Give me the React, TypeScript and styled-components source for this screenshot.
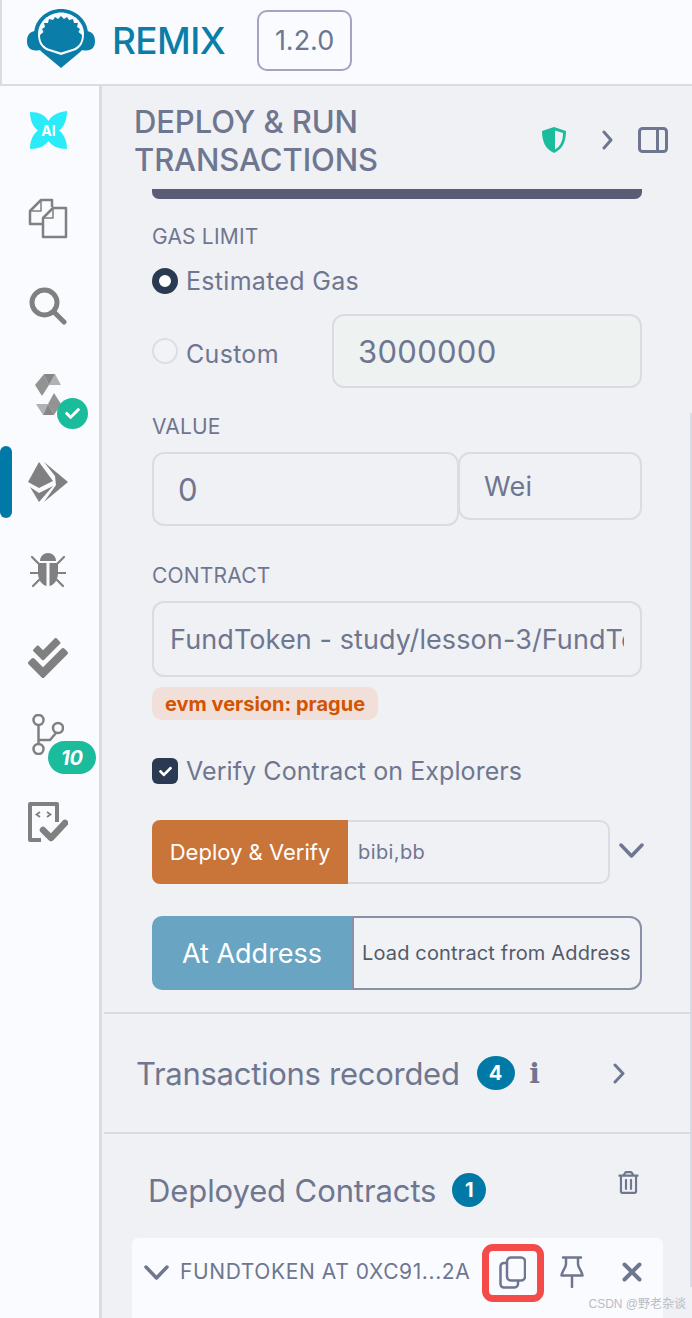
import styled, { createGlobalStyle } from "styled-components";
import { FaCheckDouble, FaRegTrashAlt, FaCheck } from "react-icons/fa";

const colors = {
  side: "#fafbff",
  panel: "#eff1f5",
  line: "#dadce3",
  text: "#6f7690",
  teal: "#0a7ea8",
  badge: "#0079a6",
  green: "#1abc9c",
  icon: "#808080",
};

const GlobalStyle = createGlobalStyle`
  html, body {
    margin: 0;
    padding: 0;
    background: ${colors.panel};
  }
  * {
    box-sizing: border-box;
  }
`;

const Page = styled.div`
  position: relative;
  width: 692px;
  height: 1318px;
  overflow: hidden;
  display: flex;
  flex-direction: column;
  font-family: Inter, "Liberation Sans", sans-serif;
  color: ${colors.text};
`;

const TopBar = styled.header`
  flex: none;
  height: 86px;
  display: flex;
  align-items: center;
  padding: 0 0 4px 25px;
  background: ${colors.side};
  border-left: 2px solid ${colors.line};
  border-bottom: 2px solid ${colors.line};
`;

const Logo = styled.svg`
  width: 68px;
  height: 60px;
  margin-top: -3px;
`;

const Brand = styled.div`
  margin-left: 17px;
  font-size: 37px;
  font-weight: 500;
  color: ${colors.teal};
  letter-spacing: -0.6px;
`;

const Version = styled.div`
  width: 95px;
  height: 61px;
  margin-left: 32px;
  display: flex;
  align-items: center;
  justify-content: center;
  font-size: 27px;
  border: 2px solid #a3a3c2;
  border-radius: 10px;
`;

const Main = styled.div`
  flex: 1;
  display: flex;
  min-height: 0;
`;

const Sidebar = styled.nav`
  flex: none;
  width: 102px;
  background: ${colors.side};
  border-right: 3px solid ${colors.line};
`;

const SideItem = styled.div<{ $h?: number }>`
  position: relative;
  height: ${(p) => p.$h ?? 88}px;
  display: flex;
  align-items: center;
  justify-content: center;
  padding-right: 3px;
  color: ${colors.icon};
`;

const ActiveMark = styled.span`
  position: absolute;
  left: 0;
  top: 8px;
  width: 12px;
  height: 72px;
  background: ${colors.badge};
  border-radius: 6px;
`;

const StatusDot = styled.span`
  position: absolute;
  left: 57px;
  top: 48px;
  width: 31px;
  height: 31px;
  border-radius: 50%;
  background: ${colors.green};
  color: #fff;
  display: flex;
  align-items: center;
  justify-content: center;
  font-size: 15px;
`;

const CountPill = styled.span`
  position: absolute;
  left: 48px;
  top: 39px;
  width: 48px;
  height: 33px;
  border-radius: 17px;
  background: ${colors.green};
  color: #fff;
  display: flex;
  align-items: center;
  justify-content: center;
  font-size: 20px;
  font-weight: 700;
  font-style: italic;
`;

const Panel = styled.main`
  flex: 1;
  min-width: 0;
  background: ${colors.panel};
  display: flex;
  flex-direction: column;
`;

const PanelHead = styled.div`
  height: 94px;
  flex: none;
  padding: 17px 24px 0 32px;
  display: flex;
  justify-content: space-between;
`;

const Title = styled.h1`
  margin: 0;
  font-size: 31px;
  line-height: 38px;
  font-weight: 500;
  letter-spacing: -0.1px;
`;

const HeadIcons = styled.div`
  display: flex;
  align-items: center;
  height: 42px;
  margin-top: 16px;
  gap: 25px;
`;

const ShieldSlot = styled.span`
  display: flex;
  margin-right: 11px;
`;

const Form = styled.section`
  padding: 0 50px;
  height: 832px;
  flex: none;
`;

const TopStrip = styled.div`
  height: 10px;
  margin-top: 9px;
  margin-bottom: 25px;
  background: #5a5b75;
  border-radius: 0 0 7px 7px;
`;

const FieldLabel = styled.div<{ $top?: number }>`
  margin-top: ${(p) => p.$top ?? 0}px;
  font-size: 21px;
  line-height: 26px;
  letter-spacing: 0.2px;
`;

const OptionRow = styled.div<{ $top?: number; $spacing?: number }>`
  display: flex;
  align-items: center;
  margin-top: ${(p) => p.$top ?? 0}px;
  min-height: 26px;
  gap: 8px;
  font-size: 25px;
  letter-spacing: ${(p) => p.$spacing ?? 0.3}px;
`;

const LowLabel = styled.span`
  padding-top: 6px;
`;

const Radio = styled.span<{ $on?: boolean }>`
  flex: none;
  width: 26px;
  height: 26px;
  border-radius: 50%;
  background: ${(p) => (p.$on ? "#fff" : "#f2f3f6")};
  border: ${(p) => (p.$on ? "7px solid #2a3a52" : "2px solid #dcdee5")};
`;

const Check = styled.span`
  flex: none;
  width: 26px;
  height: 26px;
  border-radius: 6px;
  background: #2a3a52;
  color: #fff;
  font-size: 13px;
  display: flex;
  align-items: center;
  justify-content: center;
`;

const Box = styled.div<{ $w?: number; $h: number; $size?: number; $bg?: string; $pad?: number; $spacing?: number }>`
  width: ${(p) => (p.$w ? `${p.$w}px` : "100%")};
  height: ${(p) => p.$h}px;
  flex: none;
  display: flex;
  align-items: center;
  padding: 0 ${(p) => p.$pad ?? 24}px;
  font-size: ${(p) => p.$size ?? 31}px;
  background: ${(p) => p.$bg ?? "transparent"};
  border: 2px solid ${colors.line};
  border-radius: 12px;
  letter-spacing: ${(p) => p.$spacing ?? 0.3}px;
  white-space: nowrap;
  overflow: hidden;
`;

const ContractSelect = styled(Box)`
  margin-top: 12px;
`;

const UnitSelect = styled(Box)`
  margin-left: -1px;
`;

const Clip = styled.span`
  display: block;
  overflow: hidden;
`;

const ValueRow = styled.div`
  display: flex;
  align-items: flex-start;
  margin-top: 12px;
`;

const CustomRow = styled.div`
  display: flex;
  align-items: center;
  margin-top: 18px;
  justify-content: space-between;
`;

const EvmBadge = styled.span`
  display: inline-block;
  margin-top: 10px;
  height: 33px;
  line-height: 34px;
  padding: 0 13px;
  border-radius: 10px;
  background: #f1dfd9;
  color: #d35400;
  font-size: 20px;
  font-weight: 700;
`;

const DeployRow = styled.div`
  display: flex;
  align-items: center;
  margin-top: 34px;
`;

const DeployButton = styled.div`
  width: 196px;
  height: 64px;
  flex: none;
  display: flex;
  align-items: center;
  justify-content: center;
  background: #c97539;
  color: #fff;
  font-size: 22px;
  border-radius: 8px 0 0 8px;
`;

const DeployInput = styled.div`
  width: 262px;
  height: 64px;
  flex: none;
  display: flex;
  align-items: center;
  padding-left: 10px;
  font-size: 20px;
  letter-spacing: 0.4px;
  border: 2px solid ${colors.line};
  border-left: 0;
  border-radius: 0 10px 10px 0;
`;

const ChevronSlot = styled.div`
  margin-left: 9px;
  margin-top: -4px;
  display: flex;
`;

const AddressRow = styled.div`
  display: flex;
  height: 74px;
  margin-top: 32px;
`;

const AddressButton = styled.div`
  width: 200px;
  flex: none;
  display: flex;
  align-items: center;
  justify-content: center;
  background: #69a4c3;
  color: #fff;
  font-size: 27px;
  border-radius: 10px 0 0 10px;
`;

const AddressInput = styled.div`
  flex: 1;
  display: flex;
  align-items: center;
  padding-left: 8px;
  background: #f1f2f6;
  color: #545a69;
  font-size: 20px;
  letter-spacing: 0.15px;
  white-space: nowrap;
  border: 2px solid #8a90a6;
  border-radius: 0 12px 12px 0;
`;

const Section = styled.div<{ $h: number }>`
  height: ${(p) => p.$h}px;
  flex: none;
  margin-left: 2px;
  display: flex;
  align-items: center;
  border-top: 2px solid ${colors.line};
`;

const SectionName = styled.div<{ $spacing?: number }>`
  font-size: 31px;
  letter-spacing: ${(p) => p.$spacing ?? -0.1}px;
`;

const Count = styled.span<{ $w: number; $left: number }>`
  flex: none;
  display: flex;
  align-items: center;
  justify-content: center;
  width: ${(p) => p.$w}px;
  margin-left: ${(p) => p.$left}px;
  height: 34px;
  border-radius: 50%;
  background: ${colors.badge};
  color: #fff;
  font-size: 20px;
  font-weight: 700;
`;

const RecordedRow = styled.div`
  display: flex;
  align-items: center;
  width: 100%;
  padding: 0 67px 0 32px;
`;

const InfoGlyph = styled.span`
  margin-left: 13px;
  width: 14px;
  text-align: center;
  font-family: "DejaVu Serif", "Liberation Serif", serif;
  font-weight: 700;
  font-size: 28px;
`;

const Spacer = styled.div`
  flex: 1;
`;

const DeployedBlock = styled.div`
  flex: 1;
  margin-left: 2px;
  min-height: 0;
  border-top: 2px solid ${colors.line};
  padding: 0 0 0 28px;
`;

const DeployedHead = styled.div`
  display: flex;
  align-items: center;
  height: 104px;
  padding: 8px 52px 0 16px;
`;

const TrashSlot = styled.div`
  color: ${colors.text};
  margin: -16px 0 0 auto;
  font-size: 23px;
  display: flex;
`;

const ContractCard = styled.div`
  width: 531px;
  height: 84px;
  display: flex;
  align-items: flex-start;
  padding: 14px 0 0 12px;
  background: ${colors.side};
  border-radius: 6px 6px 0 0;
`;

const CardChevron = styled.span`
  display: flex;
  height: 40px;
  align-items: center;
`;

const CardName = styled.div`
  flex: none;
  margin-left: 11px;
  width: 294px;
  overflow: hidden;
  white-space: nowrap;
  font-size: 21px;
  line-height: 40px;
  letter-spacing: 0.6px;
`;

const CardAction = styled.div<{ $w: number }>`
  flex: none;
  width: ${(p) => p.$w}px;
  height: 40px;
  display: flex;
  align-items: center;
  justify-content: center;
  color: ${colors.text};
`;

const CopyWrap = styled(CardAction)`
  position: relative;
  margin-left: 10px;
`;

const Highlight = styled.span`
  position: absolute;
  left: -2px;
  top: -8px;
  width: 62px;
  height: 58px;
  border: 7px solid #f44a4a;
  border-radius: 11px;
`;

const Scrollbar = styled.span`
  position: absolute;
  right: 0;
  top: 413px;
  width: 2px;
  height: 874px;
  background: #d9dbe2;
`;

const Watermark = styled.span`
  position: absolute;
  right: 6px;
  bottom: 7px;
  color: #b9bcc4;
  font-size: 12px;
  font-family: "Liberation Sans", "Noto Sans CJK SC", sans-serif;
`;

const Chevron = ({ dir, w, h, sw = 3 }: { dir: "right" | "down"; w: number; h: number; sw?: number }) => (
  <svg width={w} height={h} viewBox={`0 0 ${w} ${h}`} fill="none" stroke={colors.text} strokeWidth={sw} strokeLinecap="round" strokeLinejoin="round">
    {dir === "right" ? (
      <path d={`M2 2 L${w - 2} ${h / 2} L2 ${h - 2}`} />
    ) : (
      <path d={`M2 2 L${w / 2} ${h - 2} L${w - 2} 2`} />
    )}
  </svg>
);

const RemixLogo = () => (
  <Logo viewBox="0 0 68 60">
    <g fill={colors.teal}>
      <path d="M8 22 C2 23 0 27 0 32 C0 38 3 42 10 41.500 L14 41 C9 36 7 29 8 22Z" />
      <path d="M60 22 C66 23 68 27 68 32 C68 38 65 42 58 41.500 L54 41 C59 36 61 29 60 22Z" />
      <path d="M34 0 C20 0 8 10 7 24 C6.500 33 10 39 16 44 L34 59 L52 44 C58 39 61.500 33 61 24 C60 10 48 0 34 0Z" />
    </g>
    <path d="M34 3.500 C22 3.500 11 13 11 25 C11 33 14 38 19 41 L34 46 L49 41 C54 38 57 33 57 25 C57 13 46 3.500 34 3.500Z" fill={colors.side} />
    <path
      d="M34 7 L37 10 L40 8 L42 11 L46 10 L47 14 L51 14 L50 18 L53 20 L51.500 23 L55 26 C55 33 52 37 47 39.500 L34 43.500 L21 39.500 C16 37 13 33 13 26 L16.500 23 L15 20 L18 18 L17 14 L21 14 L22 10 L26 11 L28 8 L31 10Z"
      fill={colors.teal}
    />
  </Logo>
);

const AiIcon = () => (
  <svg width="39" height="39" viewBox="0 0 39 39">
    <path
      d="M1 1 C10 1 16 4 19.500 10 C23 4 29 1 38 0 C38 9 35 16 30 19.500 C35 23 38 30 38 38 C29 38 23 35 19.500 30 C16 35 10 38 1 38 C1 30 4 23 9 19.500 C4 16 1 9 1 1Z"
      fill="#2bebf8"
    />
    <text x="19.500" y="25" textAnchor="middle" fontSize="14" fontWeight="700" fill="#fff" fontFamily="Inter, sans-serif">
      AI
    </text>
  </svg>
);

const FilesIcon = () => (
  <svg width="40" height="41" viewBox="0 0 40 41" fill="none" stroke={colors.icon} strokeWidth="2.500" strokeLinejoin="round">
    <path d="M15 26 H2 V13 L13 2 H24 V9" />
    <path d="M13 2 V13 H2" strokeWidth="1.500" />
    <path d="M15 20 L25 10 H38 V39 H15Z" />
    <path d="M25 10 V20 H15" strokeWidth="1.500" />
  </svg>
);

const SearchIcon = () => (
  <svg width="38" height="38" viewBox="0 0 38 38" fill="none" stroke={colors.icon} strokeWidth="5" strokeLinecap="round">
    <circle cx="15.500" cy="15.500" r="12.500" />
    <path d="M25 25 L35 35" />
  </svg>
);

const SolidityIcon = () => (
  <svg width="27" height="41" viewBox="0 0 27 41" fill={colors.icon}>
    <path d="M9 0 L14 11 L7 22 L0 11Z" opacity="0.85" />
    <path d="M9 0 H20 L14 11Z" opacity="0.95" />
    <path d="M20 0 L26 11 H14Z" opacity="0.6" />
    <path d="M19 19 L26 30 L19 41 L13 30Z" opacity="0.85" />
    <path d="M19 41 H8 L13 30Z" opacity="0.95" />
    <path d="M8 41 L1 30 H13Z" opacity="0.6" />
  </svg>
);

const DeployIcon = () => (
  <svg width="40" height="40" viewBox="0 0 40 40" fill={colors.icon}>
    <path d="M11 0 L25 19 L11 26 L0 20Z" />
    <path d="M2 25 L11 31 L25 24 L11 40Z" />
    <path d="M16 0 L40 20 L16 40 L28 23 L27 14Z" />
  </svg>
);

const BugIcon = () => (
  <svg width="36" height="36" viewBox="0 0 36 36" fill={colors.icon} stroke="none">
    <path d="M10 9 C10 4 14 1 18 1 C22 1 26 4 26 9Z" />
    <path d="M8 11 H16.500 V34 C12 33 8 28 8 21Z" />
    <path d="M28 11 H19.500 V34 C24 33 28 28 28 21Z" />
    <path d="M2 5 L9 12 M34 5 L27 12 M0 21 H8 M36 21 H28 M3 34 L9 28 M33 34 L27 28" stroke={colors.icon} strokeWidth="2.200" strokeLinecap="round" />
  </svg>
);

const GitIcon = () => (
  <svg width="32" height="41" viewBox="0 0 32 41" fill="none" stroke={colors.icon} strokeWidth="2.500">
    <circle cx="6.500" cy="6" r="5" />
    <circle cx="6.500" cy="35" r="5" />
    <circle cx="26" cy="14" r="5" />
    <path d="M6.500 11 V30 M6.500 26 H18 L24 19" />
  </svg>
);

const VerifyIcon = () => (
  <svg width="40" height="41" viewBox="0 0 40 41" fill="none" stroke={colors.icon}>
    <path d="M13 38 H2 V2 H29 V20" strokeWidth="4" strokeLinejoin="round" />
    <path d="M15 28 L23 36 L37 21" strokeWidth="6.500" strokeLinecap="round" strokeLinejoin="round" />
    <path d="M12 10 L8.500 12.500 L12 15 M19 10 L22.500 12.500 L19 15" strokeWidth="1.800" />
  </svg>
);

const ShieldIcon = () => (
  <svg width="24" height="26" viewBox="0 0 24 26">
    <path d="M12 0 L24 4 C24 14 21 22 12 26 C3 22 0 14 0 4Z" fill={colors.green} />
    <path d="M13 3.500 L21 6 C21 13 19 19 13 22.500Z" fill={colors.panel} />
  </svg>
);

const PanelToggleIcon = () => (
  <svg width="30" height="26" viewBox="0 0 30 26" fill="none" stroke={colors.text} strokeWidth="3">
    <rect x="1.500" y="1.500" width="27" height="23" rx="3" />
    <path d="M19.500 2 V24" />
  </svg>
);

const CopyIcon = () => (
  <svg width="27" height="33" viewBox="0 0 27 33" fill="none" stroke={colors.text} strokeWidth="2.500" strokeLinejoin="round">
    <rect x="8" y="1.500" width="18" height="23" rx="4" />
    <path d="M8 7 H5 C3 7 1.500 8.500 1.500 10.500 V28 C1.500 30 3 31.500 5 31.500 H15 C17 31.500 19 30 19 28 V25" />
  </svg>
);

const PinIcon = () => (
  <svg width="24" height="32" viewBox="0 0 24 32" fill="none" stroke={colors.text} strokeWidth="2.500" strokeLinecap="round" strokeLinejoin="round">
    <path d="M3 1.500 H21 M6 2 V8 C6 12 2 15 1.500 19.500 H22.500 C22 15 18 12 18 8 V2" />
    <path d="M12 20 V31" />
  </svg>
);

const CloseIcon = () => (
  <svg width="20" height="20" viewBox="0 0 20 20" fill="none" stroke={colors.text} strokeWidth="4" strokeLinecap="round">
    <path d="M2.500 2.500 L17.500 17.500 M17.500 2.500 L2.500 17.500" />
  </svg>
);

export default function App() {
  return (
    <Page>
      <GlobalStyle />
      <TopBar>
        <RemixLogo />
        <Brand>REMIX</Brand>
        <Version>1.2.0</Version>
      </TopBar>
      <Main>
        <Sidebar>
          <SideItem><AiIcon /></SideItem>
          <SideItem><FilesIcon /></SideItem>
          <SideItem><SearchIcon /></SideItem>
          <SideItem>
            <SolidityIcon />
            <StatusDot><FaCheck /></StatusDot>
          </SideItem>
          <SideItem>
            <ActiveMark />
            <DeployIcon />
          </SideItem>
          <SideItem><BugIcon /></SideItem>
          <SideItem><FaCheckDouble size={40} /></SideItem>
          <SideItem $h={64}>
            <GitIcon />
            <CountPill>10</CountPill>
          </SideItem>
          <SideItem $h={112}><VerifyIcon /></SideItem>
        </Sidebar>
        <Panel>
          <PanelHead>
            <Title>
              DEPLOY &amp; RUN
              <br />
              TRANSACTIONS
            </Title>
            <HeadIcons>
              <ShieldSlot><ShieldIcon /></ShieldSlot>
              <Chevron dir="right" w={11} h={20} />
              <PanelToggleIcon />
            </HeadIcons>
          </PanelHead>
          <Form>
            <TopStrip />
            <FieldLabel>GAS LIMIT</FieldLabel>
            <OptionRow $top={16}>
              <Radio $on />
              Estimated Gas
            </OptionRow>
            <CustomRow>
              <OptionRow>
                <Radio />
                <LowLabel>Custom</LowLabel>
              </OptionRow>
              <Box $w={310} $h={74} $bg="#eef2f0">3000000</Box>
            </CustomRow>
            <FieldLabel $top={26}>VALUE</FieldLabel>
            <ValueRow>
              <Box $w={307} $h={74}>0</Box>
              <UnitSelect $w={184} $h={68} $size={27} $pad={24}>Wei</UnitSelect>
            </ValueRow>
            <FieldLabel $top={37}>CONTRACT</FieldLabel>
            <ContractSelect $h={76} $size={27} $pad={16} $spacing={0.1}>
              <Clip>FundToken - study/lesson-3/FundToken.sol</Clip>
            </ContractSelect>
            <EvmBadge>evm version: prague</EvmBadge>
            <OptionRow $top={36} $spacing={0.08}>
              <Check><FaCheck /></Check>
              Verify Contract on Explorers
            </OptionRow>
            <DeployRow>
              <DeployButton>Deploy &amp; Verify</DeployButton>
              <DeployInput>bibi,bb</DeployInput>
              <ChevronSlot><Chevron dir="down" w={25} h={15} sw={3.500} /></ChevronSlot>
            </DeployRow>
            <AddressRow>
              <AddressButton>At Address</AddressButton>
              <AddressInput>Load contract from Address</AddressInput>
            </AddressRow>
          </Form>
          <Section $h={120}>
            <RecordedRow>
              <SectionName $spacing={-0.28}>Transactions recorded</SectionName>
              <Count $w={38} $left={17}>4</Count>
              <InfoGlyph>i</InfoGlyph>
              <Spacer />
              <Chevron dir="right" w={12} h={21} />
            </RecordedRow>
          </Section>
          <DeployedBlock>
            <DeployedHead>
              <SectionName>Deployed Contracts</SectionName>
              <Count $w={34} $left={16}>1</Count>
              <TrashSlot><FaRegTrashAlt /></TrashSlot>
            </DeployedHead>
            <ContractCard>
              <CardChevron><Chevron dir="down" w={25} h={15} sw={3.500} /></CardChevron>
              <CardName>FUNDTOKEN AT 0XC91...2A</CardName>
              <CopyWrap $w={56}>
                <Highlight />
                <CopyIcon />
              </CopyWrap>
              <CardAction $w={64}><PinIcon /></CardAction>
              <CardAction $w={56}><CloseIcon /></CardAction>
            </ContractCard>
          </DeployedBlock>
        </Panel>
      </Main>
      <Scrollbar />
      <Watermark>CSDN @野老杂谈</Watermark>
    </Page>
  );
}
